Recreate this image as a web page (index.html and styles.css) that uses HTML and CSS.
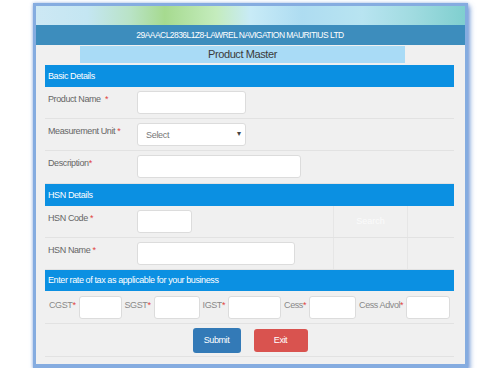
FILE: index.html
```html
<!DOCTYPE html>
<html lang="en">
<head>
<meta charset="UTF-8">
<title>Product Master</title>
<link rel="stylesheet" href="styles.css">
</head>
<body>
    <div class="window">
        <div class="banner"></div>
        <div class="company">29AAACL2836L1Z8-LAWREL NAVIGATION MAURITIUS LTD</div>
        <div class="title-area">
            <div class="title">Product Master</div>
        </div>
        <div class="form">
            <div class="section">Basic Details</div>
            <div class="row">
                <div class="label">Product Name &nbsp;<span class="req">*</span></div>
                <div class="field"><input type="text" class="in w108"></div>
            </div>
            <div class="row">
                <div class="label">Measurement Unit <span class="req">*</span></div>
                <div class="field">
                    <span class="select-wrap">
                        <select class="in sel w108"><option>Select</option></select>
                        <span class="arrow">&#9662;</span>
                    </span>
                </div>
            </div>
            <div class="row row-tall">
                <div class="label">Description<span class="req">*</span></div>
                <div class="field"><input type="text" class="in w163"></div>
            </div>

            <div class="section">HSN Details</div>
            <div class="row">
                <div class="label">HSN Code <span class="req">*</span></div>
                <div class="field grow"><input type="text" class="in w55"></div>
                <div class="cell search">Search</div>
                <div class="cell empty"></div>
            </div>
            <div class="row">
                <div class="label">HSN Name <span class="req">*</span></div>
                <div class="field grow"><input type="text" class="in w157"></div>
                <div class="cell search"></div>
                <div class="cell empty"></div>
            </div>

            <div class="section section-thin">Enter rate of tax as applicable for your business</div>
            <div class="row tax-row">
                <span class="tax-label">CGST<span class="req">*</span></span>
                <input type="text" class="in w43">
                <span class="tax-label">SGST<span class="req">*</span></span>
                <input type="text" class="in w46">
                <span class="tax-label">IGST<span class="req">*</span></span>
                <input type="text" class="in w53">
                <span class="tax-label">Cess<span class="req">*</span></span>
                <input type="text" class="in w47">
                <span class="tax-label">Cess Advol<span class="req">*</span></span>
                <input type="text" class="in w44">
            </div>
            <div class="row buttons">
                <button class="btn submit">Submit</button>
                <button class="btn exit">Exit</button>
            </div>
            <div class="foot"></div>
        </div>
    </div>
</body>
</html>
```

FILE: styles.css
```css
/* product master form */
body {
    margin: 0;
    background: #fff;
    font-family: "Liberation Sans", Arial, sans-serif;
}
.window {
    margin: 3px 0 0 33px;
    width: 429px;
    border: 3px solid #85ace0;
    border-bottom-width: 4px;
    background: #f0f0f0;
    box-shadow: 2px 3px 5px rgba(70, 120, 200, 0.7), 0 0 3px rgba(120, 160, 220, 0.6);
}
.banner {
    height: 19px;
    background: linear-gradient(to right, #cde8f4 0%, #c4e6f2 12%, #b9e3c6 22%, #a6da8f 30%, #c4ecbd 42%, #c8ebf7 50%, #aedcf1 62%, #b8e4f1 76%, #a0dbe0 88%, #7fcfcf 100%);
}
.company {
    height: 20px;
    line-height: 21px;
    background: #3d8dbd;
    color: #fff;
    text-align: center;
    font-size: 8.5px;
    letter-spacing: -0.55px;
    padding-right: 21px;
}
.title-area {
    padding: 1px 0 2px 44px;
}
.title {
    width: 325px;
    height: 17px;
    line-height: 17px;
    background: #a9dbf6;
    color: #3a3a3a;
    text-align: center;
    font-size: 11px;
    letter-spacing: -0.4px;
}
.form {
    margin: 0 11px 0 9px;
}
.section {
    height: 22px;
    line-height: 22px;
    background: #0b90e2;
    color: #fff;
    font-size: 9px;
    letter-spacing: -0.4px;
    padding-left: 3px;
}
.section-thin {
    height: 21px;
    line-height: 20px;
}
.row {
    display: flex;
    height: 31px;
    border-bottom: 1px solid #e2e2e2;
}
.row-tall {
    height: 32px;
}
.label {
    width: 89px;
    padding: 7px 0 0 3px;
    color: #666;
    font-size: 9px;
    letter-spacing: -0.4px;
}
.req {
    color: #e0413e;
}
.field {
    padding-top: 4px;
}
.grow {
    width: 196px;
}
.cell {
    width: 73px;
    border-left: 1px solid #e6e6e6;
    color: #fbfbfb;
    font-size: 9px;
    text-align: center;
    padding-top: 10px;
}
.empty {
    width: 45px;
}
.in {
    box-sizing: border-box;
    height: 23px;
    border: 1px solid #dcdcdc;
    border-radius: 3px;
    background: #fff;
    margin: 0;
    padding: 0 8px;
    font-family: "Liberation Sans", Arial, sans-serif;
    font-size: 9px;
    color: #777;
}
.w108 { width: 109px; }
.w163 { width: 164px; }
.w55 { width: 55px; }
.w157 { width: 158px; }
.w43 { width: 43px; }
.w46 { width: 46px; }
.w53 { width: 53px; }
.w47 { width: 47px; }
.w44 { width: 44px; }
.select-wrap {
    position: relative;
    display: inline-block;
}
.sel {
    -webkit-appearance: none;
    appearance: none;
    letter-spacing: -0.3px;
}
.arrow {
    position: absolute;
    right: 5px;
    top: 6px;
    font-size: 8px;
    color: #444;
}
.tax-row {
    align-items: center;
    height: 32px;
    padding-left: 1px;
}
.tax-label {
    color: #888;
    font-size: 9px;
    letter-spacing: -0.4px;
    margin: 0 3px 4px 0;
    padding-left: 3px;
}
.buttons {
    justify-content: center;
    align-items: center;
    gap: 13px;
    height: 32px;
    padding-left: 1px;
}
.btn {
    height: 25px;
    border: none;
    border-radius: 3px;
    color: #fff;
    font-family: "Liberation Sans", Arial, sans-serif;
    font-size: 9px;
    letter-spacing: -0.4px;
    padding: 0;
}
.submit {
    width: 48px;
    background: #337ab7;
}
.exit {
    width: 54px;
    height: 23px;
    background: #d9534f;
}
.foot {
    height: 7px;
}
```
